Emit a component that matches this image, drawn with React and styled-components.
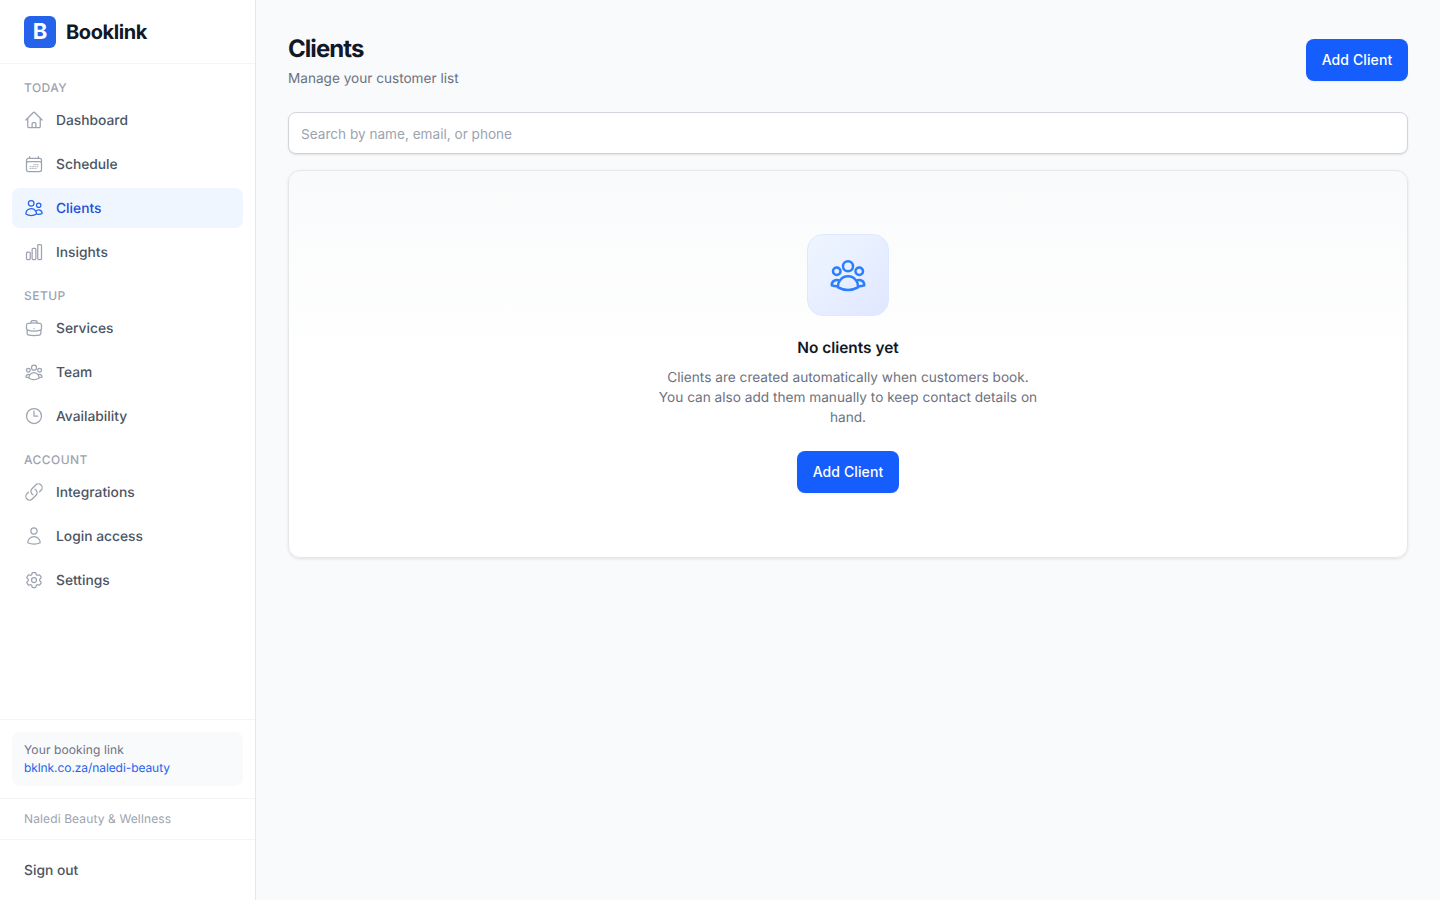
import React from "react";
import styled, { createGlobalStyle } from "styled-components";
import {
  HiOutlineHome,
  HiOutlineCalendarDays,
  HiOutlineUsers,
  HiOutlineChartBar,
  HiOutlineBriefcase,
  HiOutlineUserGroup,
  HiOutlineClock,
  HiOutlineLink,
  HiOutlineUser,
  HiOutlineCog6Tooth,
} from "react-icons/hi2";

const GlobalStyle = createGlobalStyle`
  * { box-sizing: border-box; }
  html, body { margin: 0; padding: 0; height: 100%; }
  body {
    font-family: Inter, "Liberation Sans", sans-serif;
    background: #f9fafb;
    color: #111827;
    text-rendering: geometricPrecision;
    -webkit-font-smoothing: antialiased;
  }
`;

const Shell = styled.div`
  display: flex;
  height: 900px;
  overflow: hidden;
`;

const Sidebar = styled.aside`
  width: 256px;
  flex: none;
  display: flex;
  flex-direction: column;
  background: #fff;
  border-right: 1px solid #e5e7eb;
`;

const Brand = styled.div`
  height: 64px;
  flex: none;
  display: flex;
  align-items: center;
  gap: 10px;
  padding: 0 24px;
  border-bottom: 1px solid #f3f4f6;
`;

const LogoMark = styled.div`
  width: 32px;
  height: 32px;
  padding-top: 1px;
  border-radius: 6px;
  background: #2563eb;
  color: #fff;
  display: flex;
  align-items: center;
  justify-content: center;
  font-size: 22px;
  font-weight: 700;
  line-height: 1;
`;

const BrandName = styled.div`
  font-size: 20px;
  line-height: 28px;
  font-weight: 700;
  letter-spacing: -0.4px;
  color: #111827;
`;

const Nav = styled.nav`
  flex: 1;
  padding: 16px 12px 0;
`;

const SectionLabel = styled.div`
  font-size: 12px;
  line-height: 16px;
  font-weight: 500;
  letter-spacing: 0.45px;
  text-transform: uppercase;
  color: #9ca3af;
  padding: 0 12px;
  margin-top: ${({ $first }) => ($first ? "0" : "16px")};
`;

const NavList = styled.div`
  display: flex;
  flex-direction: column;
  gap: 4px;
  margin-top: 4px;
`;

const NavItem = styled.a`
  height: 40px;
  display: flex;
  align-items: center;
  gap: 12px;
  padding: 0 12px;
  border-radius: 8px;
  font-size: 13.8px;
  font-weight: 500;
  color: ${({ $active }) => ($active ? "#1d4ed8" : "#4b5563")};
  background: ${({ $active }) => ($active ? "#eff6ff" : "transparent")};

  svg {
    width: 20px;
    height: 20px;
    flex: none;
    color: ${({ $active }) => ($active ? "#2563eb" : "#9ca3af")};
  }
`;

const NavLabel = styled.span`
  padding-top: 2px;
`;

const FooterBlock = styled.div`
  border-top: 1px solid #f3f4f6;
  padding: ${({ $pad }) => $pad};
`;

const LinkCard = styled.div`
  height: 54px;
  padding: 10px 12px 0;
  border-radius: 8px;
  background: #f9fafb;
`;

const LinkLabel = styled.div`
  font-size: 12px;
  line-height: 16px;
  letter-spacing: 0.12px;
  color: #6b7280;
`;

const LinkValue = styled.div`
  font-size: 12px;
  line-height: 16px;
  margin-top: 2px;
  letter-spacing: -0.08px;
  color: #2563eb;
`;

const BusinessName = styled.div`
  font-size: 12px;
  line-height: 16px;
  letter-spacing: 0.12px;
  color: #9ca3af;
`;

const SignOut = styled.div`
  font-size: 13.8px;
  line-height: 20px;
  font-weight: 500;
  color: #4b5563;
`;

const Main = styled.main`
  flex: 1;
  min-width: 0;
  padding: 32px;
`;

const PageHeader = styled.header`
  display: flex;
  justify-content: space-between;
  align-items: flex-start;
  margin-bottom: 23px;
`;

const Title = styled.h1`
  margin: 1px 0 0;
  font-size: 24px;
  line-height: 32px;
  font-weight: 700;
  letter-spacing: -0.95px;
  color: #111827;
`;

const Subtitle = styled.p`
  margin: 4px 0 0;
  font-size: 13.6px;
  line-height: 20px;
  color: #6b7280;
`;

const PrimaryButton = styled.button`
  width: 102px;
  height: 42px;
  padding: 0 0 2px;
  margin-top: ${({ $top }) => $top || "0"};
  border: none;
  border-radius: 8px;
  background: #155dfc;
  color: #fff;
  font-family: inherit;
  font-size: 14px;
  font-weight: 500;
  letter-spacing: 0.1px;
  box-shadow: 0 1px 2px rgba(0, 0, 0, 0.05);
`;

const SearchInput = styled.input`
  display: block;
  width: 100%;
  height: 42px;
  padding: 2px 12px 0;
  border: 1px solid #d1d5db;
  border-radius: 8px;
  background: #fff;
  font-family: inherit;
  font-size: 13.6px;
  color: #111827;
  outline: none;
  box-shadow: 0 1px 2px rgba(0, 0, 0, 0.1);

  &::placeholder {
    color: #9ca3af;
    opacity: 1;
  }
`;

const EmptyCard = styled.section`
  margin-top: 16px;
  height: 388px;
  padding-top: 63px;
  display: flex;
  flex-direction: column;
  align-items: center;
  border: 1px solid #e5e7eb;
  border-radius: 12px;
  background: linear-gradient(180deg, #f9fafb 0%, #ffffff 50%);
  box-shadow: 0 1px 3px rgba(0, 0, 0, 0.1);
`;

const EmptyIcon = styled.div`
  width: 82px;
  height: 82px;
  display: flex;
  align-items: center;
  justify-content: center;
  border: 1px solid #dbeafe;
  border-radius: 16px;
  background: linear-gradient(135deg, #eff6ff 0%, #e0e7ff 100%);
  color: #2b7fff;

  svg {
    width: 40px;
    height: 40px;
  }
`;

const EmptyTitle = styled.h2`
  margin: 20px 0 0;
  font-size: 15.4px;
  line-height: 24px;
  font-weight: 600;
  color: #111827;
`;

const EmptyText = styled.p`
  margin: 8px 0 0;
  max-width: 384px;
  text-align: center;
  font-size: 13.65px;
  line-height: 20px;
  color: #6b7280;
`;

const groups = [
  {
    label: "Today",
    items: [
      { name: "Dashboard", icon: HiOutlineHome },
      { name: "Schedule", icon: HiOutlineCalendarDays },
      { name: "Clients", icon: HiOutlineUsers, active: true },
      { name: "Insights", icon: HiOutlineChartBar },
    ],
  },
  {
    label: "Setup",
    items: [
      { name: "Services", icon: HiOutlineBriefcase },
      { name: "Team", icon: HiOutlineUserGroup },
      { name: "Availability", icon: HiOutlineClock },
    ],
  },
  {
    label: "Account",
    items: [
      { name: "Integrations", icon: HiOutlineLink },
      { name: "Login access", icon: HiOutlineUser },
      { name: "Settings", icon: HiOutlineCog6Tooth },
    ],
  },
];

export default function App() {
  return (
    <Shell>
      <GlobalStyle />
      <Sidebar>
        <Brand>
          <LogoMark>B</LogoMark>
          <BrandName>Booklink</BrandName>
        </Brand>
        <Nav>
          {groups.map((group, i) => (
            <div key={group.label}>
              <SectionLabel $first={i === 0}>{group.label}</SectionLabel>
              <NavList>
                {group.items.map(({ name, icon: Icon, active }) => (
                  <NavItem key={name} $active={active}>
                    <Icon />
                    <NavLabel>{name}</NavLabel>
                  </NavItem>
                ))}
              </NavList>
            </div>
          ))}
        </Nav>
        <FooterBlock $pad="12px">
          <LinkCard>
            <LinkLabel>Your booking link</LinkLabel>
            <LinkValue>bklnk.co.za/naledi-beauty</LinkValue>
          </LinkCard>
        </FooterBlock>
        <FooterBlock $pad="12px 24px">
          <BusinessName>Naledi Beauty &amp; Wellness</BusinessName>
        </FooterBlock>
        <FooterBlock $pad="21px 24px 19px">
          <SignOut>Sign out</SignOut>
        </FooterBlock>
      </Sidebar>
      <Main>
        <PageHeader>
          <div>
            <Title>Clients</Title>
            <Subtitle>Manage your customer list</Subtitle>
          </div>
          <PrimaryButton $top="7px">Add Client</PrimaryButton>
        </PageHeader>
        <SearchInput placeholder="Search by name, email, or phone" />
        <EmptyCard>
          <EmptyIcon>
            <HiOutlineUserGroup />
          </EmptyIcon>
          <EmptyTitle>No clients yet</EmptyTitle>
          <EmptyText>
            Clients are created automatically when customers book. You can also
            add them manually to keep contact details on hand.
          </EmptyText>
          <PrimaryButton $top="23px">Add Client</PrimaryButton>
        </EmptyCard>
      </Main>
    </Shell>
  );
}
